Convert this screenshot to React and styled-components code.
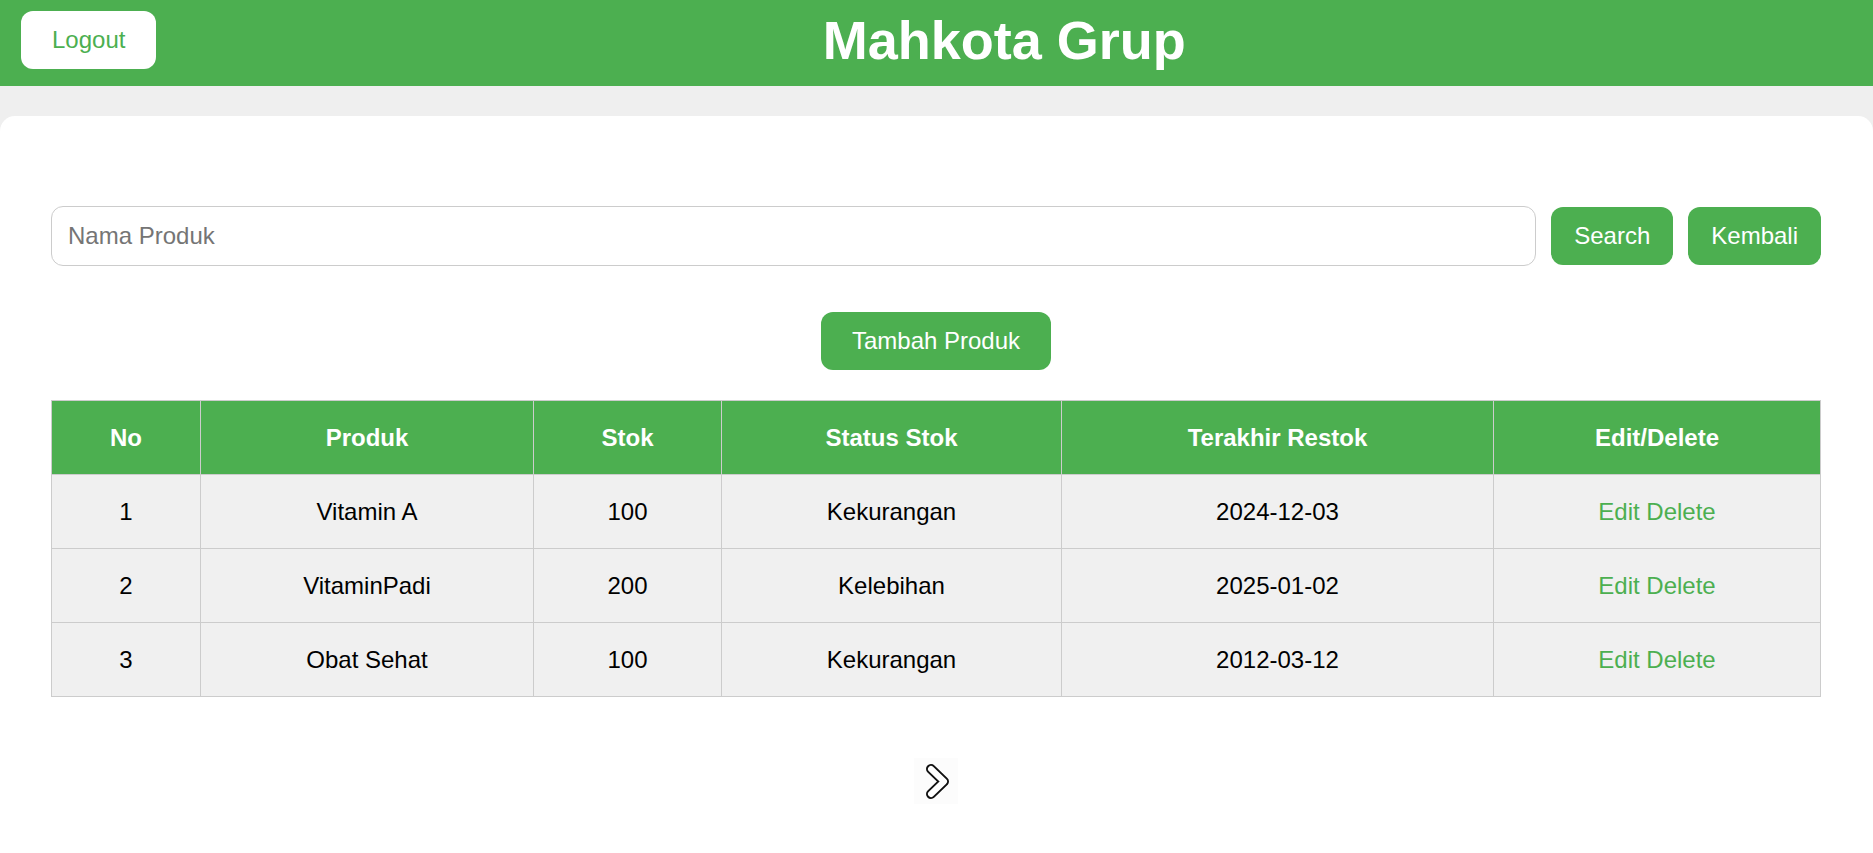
import React from "react";
import styled, { createGlobalStyle } from "styled-components";

const GREEN = "#4caf50";

const Global = createGlobalStyle`
  html, body { margin: 0; padding: 0; }
  body {
    background: #efefef;
    font-family: "Liberation Sans", Arial, sans-serif;
    font-size: 24px;
  }
  * { box-sizing: border-box; }
`;

const Header = styled.header`
  display: flex;
  align-items: center;
  height: 86px;
  padding: 11px 21px 17px 21px;
  background: ${GREEN};
`;

const LogoutButton = styled.button`
  flex: none;
  height: 58px;
  padding: 0 31px;
  border: none;
  border-radius: 12px;
  background: #fff;
  color: ${GREEN};
  font-family: inherit;
  font-size: 24px;
  cursor: pointer;
`;

const Title = styled.h1`
  flex: 1;
  margin: 0;
  text-align: center;
  color: #fff;
  font-size: 54px;
  font-weight: bold;
  line-height: 58px;
`;

const Card = styled.main`
  margin-top: 30px;
  min-height: 737px;
  background: #fff;
  border-radius: 15px 15px 0 0;
  padding: 90px 52px 40px 51px;
`;

const SearchBar = styled.div`
  display: flex;
  align-items: center;
  gap: 15px;
`;

const SearchInput = styled.input`
  flex: 1;
  height: 60px;
  padding: 0 16px;
  border: 1px solid #ccc;
  border-radius: 12px;
  font-family: inherit;
  font-size: 24px;
  color: #333;
  outline: none;
  &::placeholder { color: #757575; }
`;

const GreenButton = styled.button`
  flex: none;
  height: 58px;
  padding: 0 ${(p) => p.$px || 23}px;
  border: none;
  border-radius: 12px;
  background: ${GREEN};
  color: #fff;
  font-family: inherit;
  font-size: 24px;
  cursor: pointer;
`;

const AddRow = styled.div`
  display: flex;
  justify-content: center;
  margin-top: 46px;
  margin-bottom: 30px;
`;

const Table = styled.table`
  width: 100%;
  border-collapse: collapse;
  table-layout: fixed;
  font-size: 24px;
`;

const HeadCell = styled.th`
  height: 74px;
  padding: 0;
  border: 1px solid #ccc;
  background: ${GREEN};
  color: #fff;
  font-weight: bold;
  text-align: center;
  vertical-align: middle;
`;

const Cell = styled.td`
  height: 74px;
  padding: 0;
  border: 1px solid #ccc;
  background: #f0f0f0;
  color: ${(p) => (p.$action ? GREEN : "#000")};
  text-align: center;
  vertical-align: middle;
`;

const ActionLink = styled.span`
  color: ${GREEN};
  cursor: pointer;
`;

const Pager = styled.div`
  display: flex;
  justify-content: center;
  margin-top: 61px;
`;

const PageButton = styled.button`
  width: 44px;
  height: 46px;
  padding: 0;
  border: none;
  background: #fcfcfc;
  display: flex;
  align-items: center;
  justify-content: center;
  cursor: pointer;
`;

const rows = [
  { no: 1, produk: "Vitamin A", stok: 100, status: "Kekurangan", tgl: "2024-12-03" },
  { no: 2, produk: "VitaminPadi", stok: 200, status: "Kelebihan", tgl: "2025-01-02" },
  { no: 3, produk: "Obat Sehat", stok: 100, status: "Kekurangan", tgl: "2012-03-12" },
];

const cols = [149, 333, 188, 340, 432, null];

function Chevron() {
  return (
    <svg width="44" height="46" viewBox="0 0 44 46" aria-hidden="true">
      <polyline
        points="17,11 30,23.5 17,36"
        fill="none"
        stroke="#111"
        strokeWidth="10"
        strokeLinecap="round"
        strokeLinejoin="round"
      />
      <polyline
        points="17,11 30,23.5 17,36"
        fill="none"
        stroke="#fff"
        strokeWidth="6"
        strokeLinecap="round"
        strokeLinejoin="round"
      />
    </svg>
  );
}

export default function App() {
  return (
    <>
      <Global />
      <Header>
        <LogoutButton>Logout</LogoutButton>
        <Title>Mahkota Grup</Title>
      </Header>
      <Card>
        <SearchBar>
          <SearchInput placeholder="Nama Produk" />
          <GreenButton>Search</GreenButton>
          <GreenButton>Kembali</GreenButton>
        </SearchBar>
        <AddRow>
          <GreenButton $px={31}>Tambah Produk</GreenButton>
        </AddRow>
        <Table>
          <colgroup>
            {cols.map((w, i) => (
              <col key={i} style={w ? { width: w } : undefined} />
            ))}
          </colgroup>
          <thead>
            <tr>
              <HeadCell>No</HeadCell>
              <HeadCell>Produk</HeadCell>
              <HeadCell>Stok</HeadCell>
              <HeadCell>Status Stok</HeadCell>
              <HeadCell>Terakhir Restok</HeadCell>
              <HeadCell>Edit/Delete</HeadCell>
            </tr>
          </thead>
          <tbody>
            {rows.map((r) => (
              <tr key={r.no}>
                <Cell>{r.no}</Cell>
                <Cell>{r.produk}</Cell>
                <Cell>{r.stok}</Cell>
                <Cell>{r.status}</Cell>
                <Cell>{r.tgl}</Cell>
                <Cell $action>
                  <ActionLink>Edit</ActionLink> <ActionLink>Delete</ActionLink>
                </Cell>
              </tr>
            ))}
          </tbody>
        </Table>
        <Pager>
          <PageButton aria-label="Next">
            <Chevron />
          </PageButton>
        </Pager>
      </Card>
    </>
  );
}
